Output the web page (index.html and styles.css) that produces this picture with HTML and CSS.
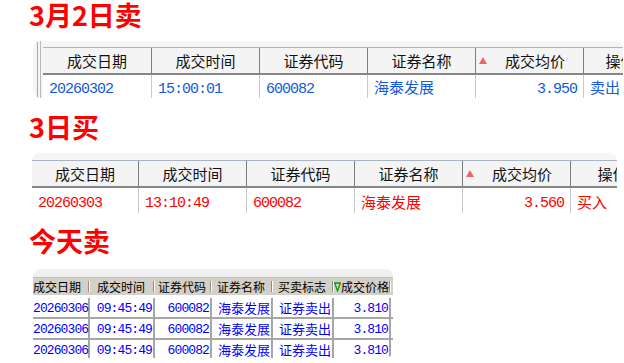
FILE: index.html
```html
<!DOCTYPE html>
<html lang="zh-CN">
<head>
<meta charset="utf-8">
<title>交易记录</title>
<link rel="stylesheet" href="styles.css">
</head>
<body>
<main class="page">
  <h2 class="title t1">3月2日卖</h2>
  <section class="shot shot-a">
    <div class="grip"></div>
    <div class="grid grid-a">
      <div class="hrow">
        <div class="hc">成交日期</div>
        <div class="hc">成交时间</div>
        <div class="hc">证券代码</div>
        <div class="hc">证券名称</div>
        <div class="hc sort"><svg class="up" width="8" height="7" viewBox="0 0 8 7"><polygon points="4,0 8,7 0,7"/></svg><span>成交均价</span></div>
        <div class="hc">操作</div>
      </div>
      <div class="drow sell">
        <div class="dc num">20260302</div>
        <div class="dc num">15:00:01</div>
        <div class="dc num">600082</div>
        <div class="dc">海泰发展</div>
        <div class="dc num right">3.950</div>
        <div class="dc">卖出</div>
      </div>
    </div>
  </section>

  <h2 class="title t2">3日买</h2>
  <section class="shot shot-b">
    <div class="grid grid-b">
      <div class="hrow">
        <div class="hc">成交日期</div>
        <div class="hc">成交时间</div>
        <div class="hc">证券代码</div>
        <div class="hc">证券名称</div>
        <div class="hc sort"><svg class="up" width="8" height="7" viewBox="0 0 8 7"><polygon points="4,0 8,7 0,7"/></svg><span>成交均价</span></div>
        <div class="hc">操作</div>
      </div>
      <div class="drow buy">
        <div class="dc num">20260303</div>
        <div class="dc num">13:10:49</div>
        <div class="dc num">600082</div>
        <div class="dc">海泰发展</div>
        <div class="dc num right">3.560</div>
        <div class="dc">买入</div>
      </div>
    </div>
  </section>

  <h2 class="title t3">今天卖</h2>
  <section class="shot shot-c">
    <div class="crow chead">
      <div class="cc first">成交日期</div>
      <div class="cc">成交时间</div>
      <div class="cc">证券代码</div>
      <div class="cc">证券名称</div>
      <div class="cc">买卖标志</div>
      <div class="cc price"><svg class="down" width="7" height="10" viewBox="0 0 7 10"><polygon points="0.7,1 6.3,1 3.5,9"/></svg>成交价格</div>
      <div class="cc fill"></div>
    </div>
    <div class="crow cdata firstrow">
      <div class="cd num">20260306</div>
      <div class="cd num">09:45:49</div>
      <div class="cd num">600082</div>
      <div class="cd">海泰发展</div>
      <div class="cd">证券卖出</div>
      <div class="cd num">3.810</div>
      <div class="cd fill"></div>
    </div>
    <div class="crow cdata">
      <div class="cd num">20260306</div>
      <div class="cd num">09:45:49</div>
      <div class="cd num">600082</div>
      <div class="cd">海泰发展</div>
      <div class="cd">证券卖出</div>
      <div class="cd num">3.810</div>
      <div class="cd fill"></div>
    </div>
    <div class="crow cdata">
      <div class="cd num">20260306</div>
      <div class="cd num">09:45:49</div>
      <div class="cd num">600082</div>
      <div class="cd">海泰发展</div>
      <div class="cd">证券卖出</div>
      <div class="cd num">3.810</div>
      <div class="cd fill"></div>
    </div>
  </section>
</main>
</body>
</html>
```

FILE: styles.css
```css
* { box-sizing: border-box; }
html, body { margin: 0; padding: 0; background: #ffffff; }
body {
  width: 624px;
  height: 363px;
  overflow: hidden;
  font-family: "Noto Sans CJK SC", "Noto Sans", sans-serif;
}
.page { display: flex; flex-direction: column; align-items: flex-start; }

.title {
  margin: 0;
  height: 36px;
  line-height: 36px;
  font-size: 27px;
  font-weight: 700;
  color: #ff0000;
  padding-left: 29px;
  white-space: nowrap;
}
.t1 { margin-top: -3px; }
.t2 { margin-top: 11px; }
.t3 { margin-top: 10px; }

.shot {
  display: flex;
  overflow: hidden;
  border-radius: 8px;
  background: #f5f5f5;
  flex: none;
}
.shot-a { margin: 8px 0 0 33px; width: 590px; height: 57px; }
.shot-b { margin: 8px 0 0 32px; width: 585px; height: 60px; }
.shot-c { margin: 10px 0 0 33px; width: 360px; height: 89px; flex-direction: column; padding-top: 8px; background: #f0f0f0; }

.grip {
  flex: none;
  width: 6px;
  margin-left: 4px;
  background: linear-gradient(to right, #a8a8a8 0 1px, transparent 1px 3px, #b8b8b8 3px 4px, transparent 4px);
}

.grid { flex: none; display: flex; flex-direction: column; }
.grid-a { margin-top: 6px; }
.grid-b { margin-top: 7px; }

.hrow {
  display: flex;
  height: 28px;
  border-top: 1px solid #a9b4c4;
  border-bottom: 2px solid #868686;
  background: #f4f4f4;
}
.hc {
  flex: none;
  border-right: 1px solid #7d7d7d;
  font-size: 15px;
  line-height: 25px;
  text-align: center;
  color: #111;
  white-space: nowrap;
}
.hc.sort { display: flex; align-items: center; padding-left: 3px; }
.hc.sort span { flex: 1; text-align: center; }
.up { flex: none; fill: #f06464; }

.drow { display: flex; height: 23px; background: #ffffff; }
.dc {
  flex: none;
  border-right: 1px solid #c8c8c8;
  font-size: 15px;
  padding-left: 6px;
  white-space: nowrap;
}
.dc.right { text-align: right; padding-left: 0; padding-right: 6px; }
.dc.num { font-family: "Liberation Mono", monospace; font-size: 15px; letter-spacing: -1px; }
.sell { color: #1459d9; line-height: 21px; }
.sell .dc { padding-top: 1px; }
.sell .dc.num { padding-top: 4px; }
.buy { color: #ff0000; height: 26px; line-height: 22px; }
.buy .dc { padding-top: 3px; }
.buy .dc.num { padding-top: 5px; }

.grid-a .hc:nth-child(1), .grid-a .dc:nth-child(1) { width: 109px; }
.grid-a .hc:nth-child(n+2), .grid-a .dc:nth-child(n+2) { width: 108px; }
.grid-a .hc:nth-child(6), .grid-a .dc:nth-child(6) { width: 74px; }
.grid-b .hc:nth-child(1), .grid-b .dc:nth-child(1) { width: 107px; }
.grid-b .hc:nth-child(n+2), .grid-b .dc:nth-child(n+2) { width: 108px; }
.grid-b .hc:nth-child(6), .grid-b .dc:nth-child(6) { width: 84px; }

/* third screenshot: classic list view */
.crow { display: flex; flex: none; }
.chead {
  height: 18px;
  border-top: 1px solid #c4c0b8;
  background: #d4d0c8;
}
.cc {
  flex: none;
  font-size: 12px;
  line-height: 17px;
  color: #000;
  text-align: center;
  padding-right: 3px;
  white-space: nowrap;
  background:
    linear-gradient(#8c8c8c, #8c8c8c) right 1px top 3px / 1px 11px no-repeat,
    linear-gradient(#ffffff, #ffffff) right 0 top 3px / 1px 11px no-repeat;
}
.cc.first { text-align: left; padding-right: 0; }
.cc.price { text-align: left; padding: 0; display: flex; align-items: center; }
.down { flex: none; fill: none; stroke: #0a9a0a; stroke-width: 1.3; }
.cc.fill, .cd.fill { background: none; border: 0; }

.cdata {
  height: 21px;
  background: #ffffff;
  border-bottom: 2px solid #a6a6a6;
}
.cdata.firstrow { height: 24px; padding-top: 3px; }
.cd {
  flex: none;
  border-right: 2px solid #a6a6a6;
  font-size: 13px;
  line-height: 19px;
  color: #0000ff;
  text-align: right;
  padding-right: 1px;
  white-space: nowrap;
}
.cd.num { font-family: "Liberation Mono", monospace; font-size: 13px; letter-spacing: -0.9px; padding-top: 1px; }

.crow > :nth-child(1) { width: 57px; }
.crow > :nth-child(2) { width: 65px; }
.crow > :nth-child(3) { width: 57px; }
.crow > :nth-child(4) { width: 61px; }
.crow > :nth-child(5) { width: 61px; }
.crow > :nth-child(6) { width: 57px; }
.crow > :nth-child(7) { flex: 1; width: auto; }
```
